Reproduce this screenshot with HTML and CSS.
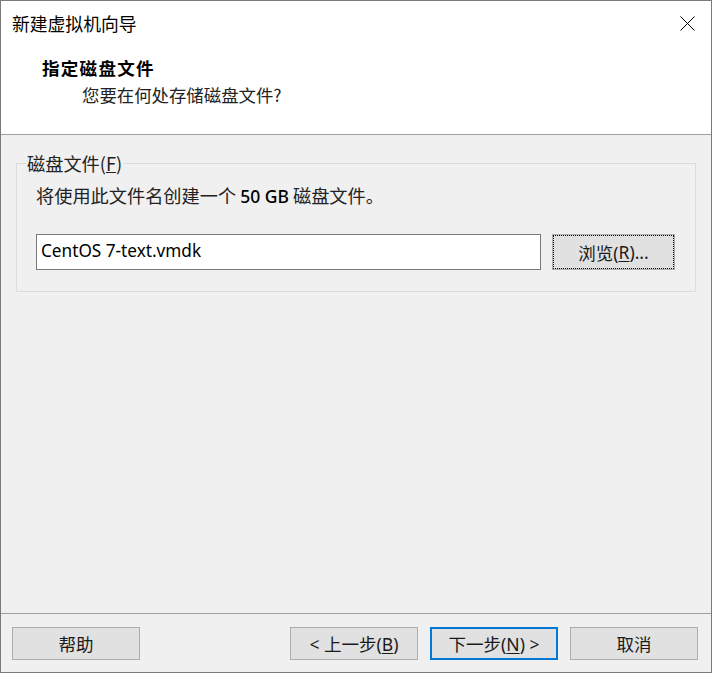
FILE: index.html
```html
<!DOCTYPE html>
<html lang="zh-CN">
<head>
<meta charset="utf-8">
<title>新建虚拟机向导</title>
<link rel="stylesheet" href="styles.css">
</head>
<body>
<div class="window">
  <div class="header">
    <div class="titlebar">
      <span class="title">新建虚拟机向导</span>
      <svg class="close" width="15" height="15" viewBox="0 0 15 15" aria-hidden="true">
        <path d="M0.5 0.5 L14.5 14.5 M14.5 0.5 L0.5 14.5" stroke="#000" stroke-width="1" fill="none"/>
      </svg>
    </div>
    <div class="heading">指定磁盘文件</div>
    <div class="subheading">您要在何处存储磁盘文件?</div>
  </div>
  <div class="content">
    <fieldset class="group">
      <legend class="legend">磁盘文件(<u>F</u>)</legend>
      <div class="desc">将使用此文件名创建一个 <span class="lat">50 GB</span> 磁盘文件。</div>
      <div class="filerow">
        <div class="input">CentOS 7-text.vmdk</div>
        <div class="btn browse">浏览(<u>R</u>)...</div>
      </div>
    </fieldset>
  </div>
  <div class="footer">
    <div class="btn">帮助</div>
    <div class="spacer"></div>
    <div class="btn">&lt; 上一步(<u>B</u>)</div>
    <div class="btn primary">下一步(<u>N</u>) &gt;</div>
    <div class="btn">取消</div>
  </div>
</div>
</body>
</html>
```

FILE: styles.css
```css
* { box-sizing: border-box; }
html, body { margin: 0; padding: 0; background: #f0f0f0; }
body {
  font-family: "Noto Sans", "Noto Sans CJK SC", sans-serif;
  color: #1a1a1a;
}
.window {
  width: 712px;
  height: 673px;
  border: 1px solid #7a7a7a;
  display: flex;
  flex-direction: column;
  background: #f0f0f0;
}
.header {
  background: #fff;
  height: 134px;
  border-bottom: 1px solid #a0a0a0;
  flex: none;
}
.titlebar {
  height: 44px;
  display: flex;
  align-items: center;
  justify-content: space-between;
  padding: 0 16px 0 11px;
}
.title {
  font-family: "Noto Sans CJK SC", sans-serif;
  font-size: 17.8px;
  color: #000;
  line-height: 24px;
}
.close { display: block; }
.heading {
  margin-top: 11px;
  padding-left: 41px;
  font-family: "Noto Sans CJK SC", serif;
  font-weight: bold;
  font-size: 17.5px;
  letter-spacing: 1.3px;
  line-height: 24px;
  color: #000;
}
.subheading {
  margin-top: 3px;
  padding-left: 81px;
  font-family: "Noto Sans CJK SC", sans-serif;
  font-size: 17.4px;
  line-height: 24px;
  color: #222;
}
.content {
  flex: 1;
  padding: 18px 15px 0 15px;
}
.group {
  margin: 0;
  border: 1px solid #dcdcdc;
  padding: 0 20px 21px 19px;
}
.legend {
  margin-left: -10px;
  padding: 0 1px;
  font-family: "Noto Sans CJK SC", sans-serif;
  font-size: 18.2px;
  line-height: 20px;
  color: #222;
}
.desc {
  margin-top: 12px;
  font-family: "Noto Sans CJK SC", sans-serif;
  font-size: 18.2px;
  line-height: 20px;
  color: #222;
}
.lat {
  font-family: "Noto Sans", sans-serif;
  font-size: 17.5px;
  font-weight: 500;
  color: #000;
}
.filerow {
  margin-top: 28px;
  display: flex;
  gap: 11px;
}
.input {
  width: 505px;
  height: 36px;
  border: 1px solid #7a7a7a;
  background: #fff;
  padding: 0 4px 3px 4px;
  display: flex;
  align-items: center;
  font-family: "Noto Sans", sans-serif;
  font-size: 17.2px;
  color: #000;
}
.btn {
  width: 128px;
  height: 33px;
  background: #e1e1e1;
  border: 1px solid #adadad;
  display: flex;
  align-items: center;
  justify-content: center;
  font-family: "Noto Sans", "Noto Sans CJK SC", sans-serif;
  font-size: 17.5px;
  color: #1a1a1a;
}
.btn u { text-underline-offset: 2px; }
.browse {
  width: 123px;
  height: 36px;
  outline: 1px dotted #000;
  outline-offset: -2px;
}
.footer {
  flex: none;
  height: 59px;
  border-top: 1px solid #a0a0a0;
  padding: 13px 13px 12px 11px;
  display: flex;
  gap: 12px;
}
.spacer { flex: 1; }
.primary {
  border: 2px solid #0078d7;
}
```
